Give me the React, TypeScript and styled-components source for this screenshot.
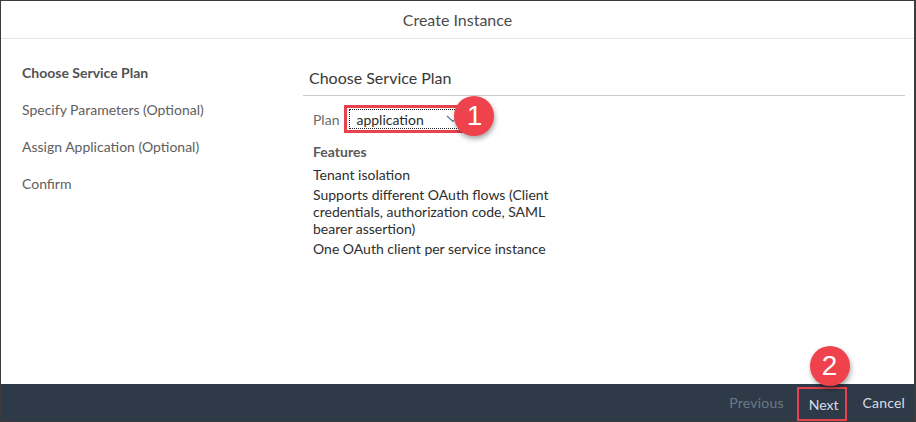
import React from 'react';
import styled, { createGlobalStyle } from 'styled-components';

const GlobalStyle = createGlobalStyle`
  html, body {
    margin: 0;
    padding: 0;
    background: #ffffff;
  }
  body {
    font-family: 'Lato', 'Liberation Sans', sans-serif;
  }
`;

const Dialog = styled.div`
  box-sizing: border-box;
  width: 916px;
  height: 422px;
  display: flex;
  flex-direction: column;
  border: 1px solid #3c3c3c;
  border-right-width: 2px;
  background: #fff;
  overflow: hidden;
`;

const Header = styled.header`
  height: 37px;
  flex-shrink: 0;
  display: flex;
  align-items: center;
  justify-content: center;
  border-bottom: 1px solid #e5e5e5;
  color: #4b4b4b;
  font-size: 16px;
`;

const Body = styled.div`
  flex: 1;
  display: flex;
`;

const Nav = styled.nav`
  width: 281px;
  padding: 25px 0 0 21px;
  display: flex;
  flex-direction: column;
  gap: 19px;
`;

const NavItem = styled.div<{ $active?: boolean }>`
  font-size: 14px;
  line-height: 18px;
  color: ${p => (p.$active ? '#525252' : '#5e5e5e')};
  font-weight: ${p => (p.$active ? 700 : 400)};
`;

const Content = styled.section`
  flex: 1;
  padding: 29px 9px 0 0;
`;

const SectionTitle = styled.h2`
  margin: 0;
  padding: 0 0 8px 6px;
  font-size: 16px;
  font-weight: 400;
  color: #383838;
  border-bottom: 1px solid #cccccc;
`;

const Form = styled.div`
  padding: 9px 0 0 10px;
`;

const PlanRow = styled.div`
  display: flex;
  align-items: center;
  gap: 5px;
`;

const Label = styled.span`
  font-size: 14px;
  color: #6a6d70;
`;

const Highlight = styled.div`
  position: relative;
  border: 3px solid #e8424c;
  padding: 1px 2px;
`;

const Select = styled.div`
  width: 116px;
  height: 20px;
  box-sizing: border-box;
  border: 1px dotted #222;
  display: flex;
  align-items: center;
  justify-content: space-between;
  padding: 0 4px 0 6px;
  font-size: 14px;
  color: #2a2a2a;
`;

const Badge = styled.div<{ $left: number; $top: number }>`
  position: absolute;
  left: ${p => p.$left}px;
  top: ${p => p.$top}px;
  width: 40px;
  height: 40px;
  border-radius: 50%;
  background: #f0424c;
  color: #fff;
  font-family: 'Liberation Sans', Arial, sans-serif;
  font-size: 28px;
  display: flex;
  align-items: center;
  justify-content: center;
  box-shadow: 1px 3px 5px rgba(0, 0, 0, 0.35);
  z-index: 2;
`;

const FeaturesTitle = styled.div`
  margin-top: 10px;
  font-size: 14px;
  font-weight: 700;
  color: #5a5a5a;
`;

const FeatureList = styled.ul`
  list-style: none;
  margin: 6px 0 0;
  padding: 0;
  width: 245px;
  display: flex;
  flex-direction: column;
  gap: 3px;
`;

const Feature = styled.li`
  font-size: 14px;
  line-height: 17px;
  color: #2e2e2e;
`;

const Footer = styled.footer`
  height: 37px;
  flex-shrink: 0;
  background: #2e3a47;
  display: flex;
  align-items: center;
  justify-content: flex-end;
  padding-right: 9px;
`;

const FooterButton = styled.div<{ $disabled?: boolean }>`
  height: 30px;
  display: flex;
  align-items: center;
  font-size: 14px;
  letter-spacing: 0.2px;
  color: ${p => (p.$disabled ? '#6b7a88' : '#d7dee6')};
  padding: ${p => (p.$disabled ? '0 13px 0 0' : '0 0 0 15px')};
`;

const FooterHighlight = styled.div`
  position: relative;
  align-self: flex-end;
  border: 2px solid #e8424c;
  height: 34px;
  box-sizing: border-box;
  display: flex;
  align-items: center;
  padding: 0 7px 0 10px;
  font-size: 14px;
  color: #d7dee6;
`;

const Chevron = () => (
  <svg width="14" height="8" viewBox="0 0 14 8" fill="none">
    <path d="M1 1l6 5.5L13 1" stroke="#5b7896" strokeWidth="1.2" />
  </svg>
);

export default function App() {
  return (
    <>
      <GlobalStyle />
      <Dialog>
        <Header>Create Instance</Header>
        <Body>
          <Nav>
            <NavItem $active>Choose Service Plan</NavItem>
            <NavItem>Specify Parameters (Optional)</NavItem>
            <NavItem>Assign Application (Optional)</NavItem>
            <NavItem>Confirm</NavItem>
          </Nav>
          <Content>
            <SectionTitle>Choose Service Plan</SectionTitle>
            <Form>
              <PlanRow>
                <Label>Plan</Label>
                <Highlight>
                  <Select>
                    application
                    <Chevron />
                  </Select>
                  <Badge $left={107} $top={-12}>1</Badge>
                </Highlight>
              </PlanRow>
              <FeaturesTitle>Features</FeaturesTitle>
              <FeatureList>
                <Feature>Tenant isolation</Feature>
                <Feature>
                  Supports different OAuth flows (Client credentials, authorization code, SAML bearer assertion)
                </Feature>
                <Feature>One OAuth client per service instance</Feature>
              </FeatureList>
            </Form>
          </Content>
        </Body>
        <Footer>
          <FooterButton $disabled>Previous</FooterButton>
          <FooterHighlight>
            Next
            <Badge $left={11} $top={-43}>2</Badge>
          </FooterHighlight>
          <FooterButton>Cancel</FooterButton>
        </Footer>
      </Dialog>
    </>
  );
}
